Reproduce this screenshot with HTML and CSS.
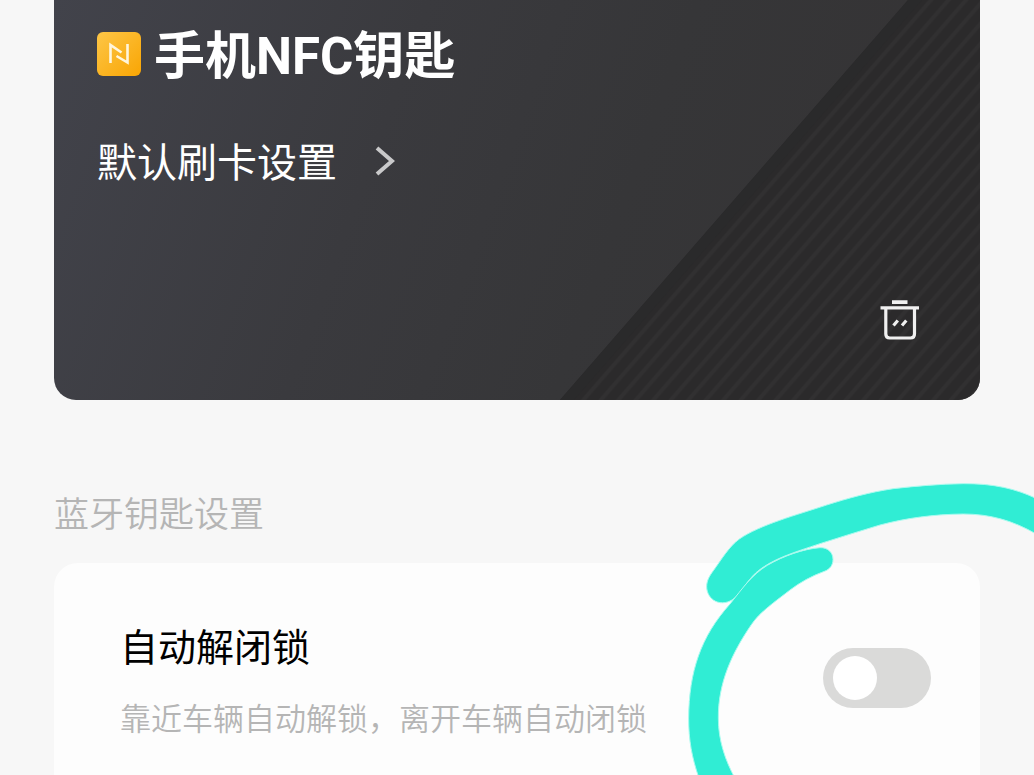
FILE: index.html
```html
<!DOCTYPE html>
<html lang="zh-CN">
<head>
  <meta charset="UTF-8" />
  <meta name="viewport" content="width=device-width, initial-scale=1.0"/>
  <title>手机NFC钥匙</title>
  <link rel="stylesheet" href="styles.css">
</head>
<body>

  <main class="page">

    <!-- NFC key card -->
    <section class="key-card">
      <svg class="card-stripes" viewBox="0 0 420 400" aria-hidden="true">
        <defs>
          <pattern id="stripes" x="17" width="17.5" height="20" patternUnits="userSpaceOnUse" patternTransform="skewX(-41)">
            <rect width="17.5" height="20" fill="#2b2a2b"/>
            <rect x="1" width="6" height="20" fill="#2e2d2e"/>
            <rect x="2" width="4" height="20" fill="#313031"/>
          </pattern>
        </defs>
        <path d="M348 0H420V400H0Z" fill="url(#stripes)"/>
        <path d="M348 0H362L14 400H0Z" fill="#2a2a2b"/>
      </svg>

      <div class="key-title">
        <svg class="nfc-icon" viewBox="0 0 44 44" aria-hidden="true">
          <defs>
            <linearGradient id="gold" x1="0" y1="0" x2="1" y2="1">
              <stop offset="0" stop-color="#fdc647"/>
              <stop offset="1" stop-color="#f9a503"/>
            </linearGradient>
          </defs>
          <rect width="44" height="44" rx="6" fill="url(#gold)"/>
          <path d="M13.5 31V13L24.5 20.5M30.5 12V30.5L19.5 24" fill="none" stroke="#fff6dc" stroke-width="2.6"/>
        </svg>
        <h1>手机NFC钥匙</h1>
      </div>

      <a class="default-link" href="#">
        默认刷卡设置
        <svg class="chevron" viewBox="0 0 20 30" aria-hidden="true">
          <path d="M2 2L17 15L2 28" fill="none" stroke="#c9c9ca" stroke-width="4"/>
        </svg>
      </a>

      <button class="delete-btn" type="button" aria-label="删除">
        <svg viewBox="0 0 40 42" aria-hidden="true">
          <g fill="none" stroke="#f0f0f0" stroke-width="3.2">
            <path d="M12 2.2H27.5" stroke-width="3.8"/>
            <path d="M0.5 7.8H39"/>
            <path d="M5.8 8V34Q5.8 38 9.8 38H30.5Q34.5 38 34.5 34V8"/>
            <path d="M13.5 25.5L17.8 20.5M22 25.5L26.3 20.5"/>
          </g>
        </svg>
      </button>
    </section>

    <h2 class="section-title">蓝牙钥匙设置</h2>

    <!-- Bluetooth settings -->
    <section class="settings">
      <div class="setting-text">
        <label for="autoLock">自动解闭锁</label>
        <p id="autoLockHint">靠近车辆自动解锁，离开车辆自动闭锁</p>
      </div>
      <input class="switch" type="checkbox" role="switch" id="autoLock" aria-describedby="autoLockHint" />
    </section>

    <!-- Marker circle round the switch -->
    <svg class="marker" viewBox="0 0 1062 915" aria-hidden="true">
      <g fill="#30edd4" stroke="#a9fbef" stroke-width="3">
        <path d="M80 350C80 330 90 316 100 302C125 268 145 232 178 207C240 164 350 135 440 105C500 86 570 66 640 56C710 48 780 42 850 41C940 40 1010 57 1070 86V193C1000 152 930 132 850 132C760 133 680 144 600 165C540 183 480 202 420 221C340 248 275 267 228 308C200 334 184 366 164 384C147 399 124 402 107 394C90 386 80 368 80 350Z"/>
        <path d="M420 233C444 232 459 248 459 268C459 285 450 298 433 304C395 318 360 337 330 360C288 393 240 425 214 464C155 550 114 640 115 745C115 810 135 870 165 925H57C35 860 26 810 26 745C27 605 62 500 150 402C190 352 215 315 262 286C312 257 370 237 420 233Z"/>
      </g>
    </svg>

  </main>

</body>
</html>
```

FILE: styles.css
```css
* {
  box-sizing: border-box;
}

body {
  margin: 0;
  font-family: Roboto, 'Noto Sans CJK SC', sans-serif;
  background: #f7f7f7;
  color: #000;
}

h1, h2, p {
  margin: 0;
}

.page {
  position: relative;
  display: flex;
  flex-direction: column;
  min-height: 100vh;
  padding: 0 54px;
  overflow: hidden;
}

/* key card */
.key-card {
  position: relative;
  display: flex;
  flex-direction: column;
  align-items: flex-start;
  padding: 20px 60px 58px 43px;
  border-radius: 0 0 22px 22px;
  background: linear-gradient(110deg, #42434b 0%, #3a3a3e 35%, #363638 60%, #343233 100%);
  color: #fff;
  overflow: hidden;
}

.card-stripes {
  position: absolute;
  top: 0;
  right: 0;
  height: 100%;
}

.key-title {
  display: flex;
  align-items: flex-start;
  gap: 13px;
}

.key-title h1 {
  font-size: 51px;
  line-height: 74px;
  font-weight: 700;
}

.nfc-icon {
  width: 44px;
  height: 44px;
  margin-top: 12px;
}

.default-link {
  display: flex;
  align-items: flex-start;
  gap: 38px;
  margin-top: 37px;
  font-size: 40px;
  line-height: 66px;
  color: #fff;
  text-decoration: none;
}

.chevron {
  width: 20px;
  height: 30px;
  margin-top: 15px;
}

.delete-btn {
  position: relative;
  display: flex;
  align-self: flex-end;
  margin-top: 103px;
  padding: 0;
  border: none;
  background: none;
  cursor: pointer;
}

.delete-btn svg {
  width: 40px;
  height: 42px;
}

.section-title {
  margin: 90px 0 21px;
  font-size: 35px;
  line-height: 52px;
  font-weight: 350;
  color: #b5b5b5;
}

/* settings */
.settings {
  flex: 1;
  display: flex;
  align-items: flex-start;
  justify-content: space-between;
  padding: 55px 49px 30px 66px;
  border-radius: 24px 24px 0 0;
  background: #fdfdfd;
}

.setting-text label {
  display: block;
  font-size: 38px;
  line-height: 60px;
}

.setting-text p {
  margin-top: 18px;
  font-size: 31px;
  line-height: 48px;
  font-weight: 350;
  color: #b5b5b5;
}

.switch {
  appearance: none;
  flex: none;
  width: 108px;
  height: 60px;
  margin: 30px 0 0;
  padding: 8px 10px;
  border-radius: 30px;
  background: #dadad9;
  cursor: pointer;
}

.switch::before {
  content: "";
  display: block;
  width: 44px;
  height: 44px;
  border-radius: 50%;
  background: #fff;
}

.switch:checked {
  background: #30edd4;
}

.switch:checked::before {
  margin-left: auto;
}

.marker {
  position: absolute;
  top: 470px;
  right: 0;
  width: 354px;
  height: 305px;
  pointer-events: none;
}
```
